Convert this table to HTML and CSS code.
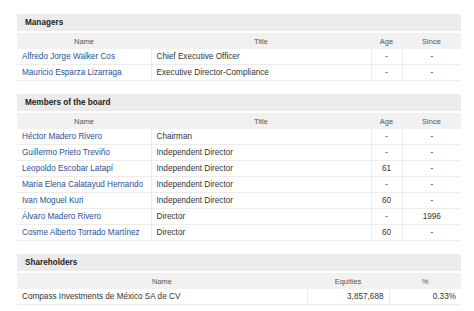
FILE: index.html
```html
<!DOCTYPE html>
<html>
<head>
<meta charset="utf-8">
<link rel="stylesheet" href="styles.css">
</head>
<body>
<div class="page">
  <section class="panel">
    <div class="panel-title">Managers</div>
    <table class="grid">
      <colgroup><col class="c-name"><col class="c-title"><col class="c-age"><col class="c-since"></colgroup>
      <thead><tr><th>Name</th><th>Title</th><th>Age</th><th>Since</th></tr></thead>
      <tbody>
        <tr><td class="link">Alfredo Jorge Walker Cos</td><td>Chief Executive Officer</td><td class="ctr">-</td><td class="ctr">-</td></tr>
        <tr><td class="link">Mauricio Esparza Lizarraga</td><td>Executive Director-Compliance</td><td class="ctr">-</td><td class="ctr">-</td></tr>
      </tbody>
    </table>
  </section>

  <section class="panel">
    <div class="panel-title">Members of the board</div>
    <table class="grid">
      <colgroup><col class="c-name"><col class="c-title"><col class="c-age"><col class="c-since"></colgroup>
      <thead><tr><th>Name</th><th>Title</th><th>Age</th><th>Since</th></tr></thead>
      <tbody>
        <tr><td class="link">Héctor Madero Rivero</td><td>Chairman</td><td class="ctr">-</td><td class="ctr">-</td></tr>
        <tr><td class="link">Guillermo Prieto Treviño</td><td>Independent Director</td><td class="ctr">-</td><td class="ctr">-</td></tr>
        <tr><td class="link">Leopoldo Escobar Latapí</td><td>Independent Director</td><td class="ctr">61</td><td class="ctr">-</td></tr>
        <tr><td class="link">Maria Elena Calatayud Hernando</td><td>Independent Director</td><td class="ctr">-</td><td class="ctr">-</td></tr>
        <tr><td class="link">Ivan Moguel Kuri</td><td>Independent Director</td><td class="ctr">60</td><td class="ctr">-</td></tr>
        <tr><td class="link">Álvaro Madero Rivero</td><td>Director</td><td class="ctr">-</td><td class="ctr">1996</td></tr>
        <tr><td class="link">Cosme Alberto Torrado Martínez</td><td>Director</td><td class="ctr">60</td><td class="ctr">-</td></tr>
      </tbody>
    </table>
  </section>

  <section class="panel">
    <div class="panel-title">Shareholders</div>
    <table class="grid">
      <colgroup><col class="c-sh-name"><col class="c-eq"><col class="c-pct"></colgroup>
      <thead><tr><th>Name</th><th>Equities</th><th>%</th></tr></thead>
      <tbody>
        <tr><td>Compass Investments de México SA de CV</td><td class="num">3,857,688</td><td class="num">0.33%</td></tr>
      </tbody>
    </table>
  </section>
</div>
</body>
</html>
```

FILE: styles.css
```css
html, body {
  margin: 0;
  padding: 0;
  background: #ffffff;
}

.page {
  padding: 14px 0 0 17px;
  width: 444px;
  font-family: "Liberation Sans", Arial, sans-serif;
  color: #333333;
}

.panel {
  margin-bottom: 13px;
}

.panel-title {
  height: 17px;
  line-height: 17px;
  background: #ebebeb;
  padding-left: 8px;
  font-weight: bold;
  font-size: 8.2px;
  color: #222222;
  margin-bottom: 2px;
}

.grid {
  width: 444px;
  border-collapse: collapse;
  table-layout: fixed;
}

.c-name { width: 134px; }
.c-title { width: 220px; }
.c-age { width: 31px; }
.c-since { width: 59px; }

.c-sh-name { width: 290px; }
.c-eq { width: 82px; }
.c-pct { width: 72px; }

.grid th {
  height: 16px;
  padding: 0;
  background: #f1f1f1;
  font-weight: normal;
  font-size: 7.5px;
  color: #555555;
  text-align: center;
}

.grid td {
  height: 15px;
  padding: 0 4px 0 5px;
  font-size: 8.2px;
  color: #333333;
  border-bottom: 1px solid #ececec;
  border-left: 1px solid #ececec;
  white-space: nowrap;
  overflow: hidden;
}

.grid td:first-child {
  border-left: none;
}

.grid td.link {
  color: #2c4f95;
}

.grid td.ctr {
  text-align: center;
  padding: 0;
}

.grid td.num {
  text-align: right;
  padding-right: 5px;
}
```
